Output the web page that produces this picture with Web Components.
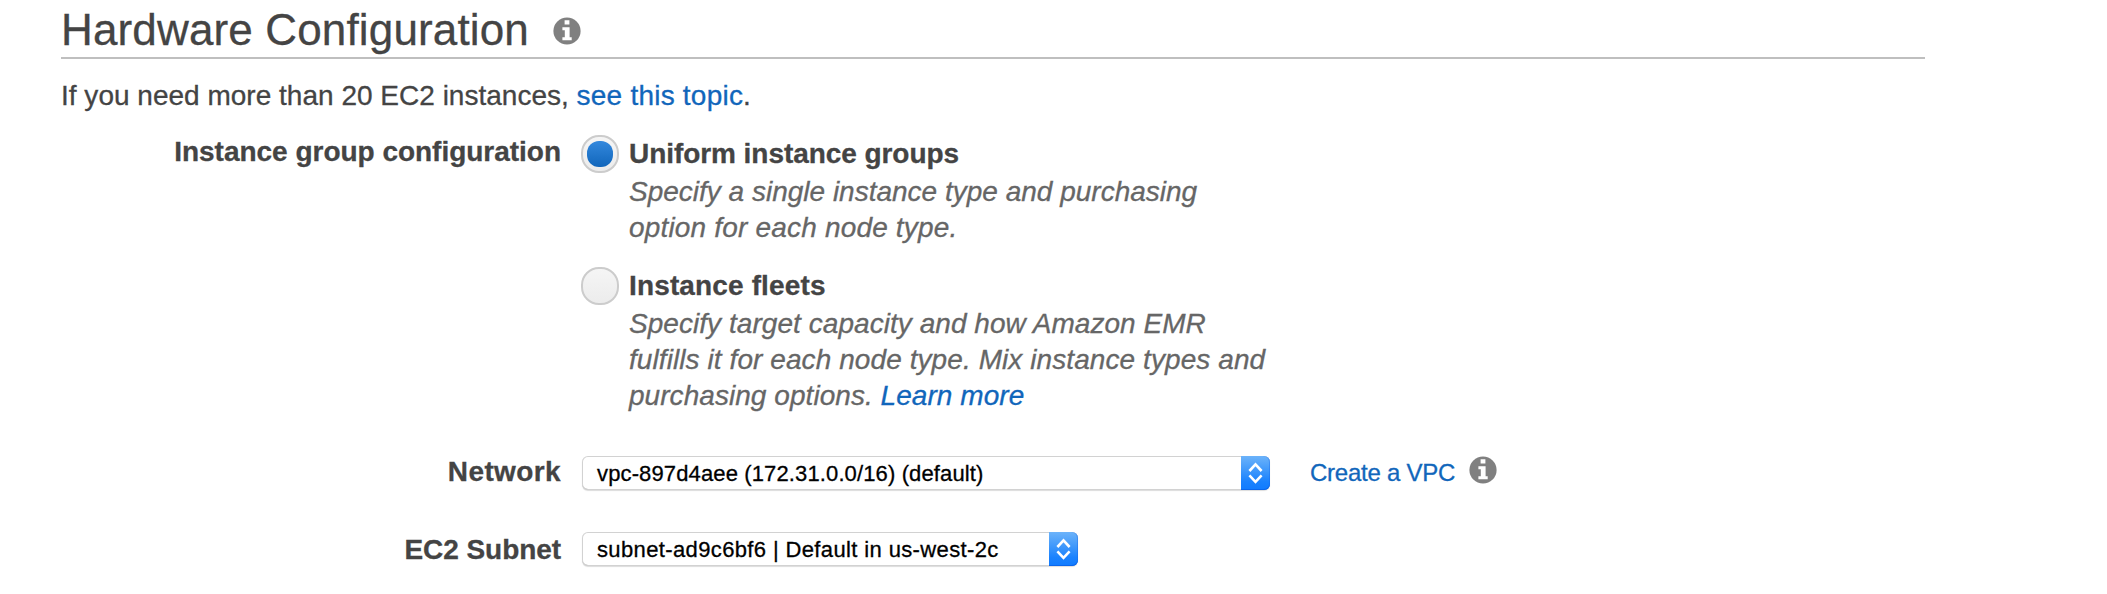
<!DOCTYPE html>
<html lang="en">
<head>
<meta charset="utf-8">
<title>Hardware Configuration</title>
<style>
body { margin: 0; background: #fff; color: #444; font: 28px/31px "Liberation Sans", Arial, sans-serif; -webkit-text-stroke: .3px; }
</style>
</head>
<body>
<hardware-config></hardware-config>
<script>
function define(name, html) {
  const t = document.createElement('template');
  t.innerHTML = html;
  customElements.define(name, class extends HTMLElement {
    constructor() {
      super();
      this.attachShadow({ mode: 'open' }).append(t.content.cloneNode(true));
    }
  });
}

define('info-icon', `
<style>:host{display:block;width:28px;height:28px;flex:none}svg{display:block}</style>
<svg width="28" height="28" viewBox="0 0 28 28"><circle cx="14" cy="14" r="13.6" fill="#808080"/>
<path fill="#fff" d="M11.6 3.3h4.8v4.3h-4.8zM9.4 10.2h7.2v10h2.1v3.1H9.4v-3.1h2.4v-6.9H9.4z"/></svg>`);

define('text-link', `
<style>:host{display:inline;color:#1166bb}a{color:inherit;text-decoration:none}</style>
<a href="#"><slot></slot></a>`);

define('section-title', `
<style>
:host{display:flex;align-items:flex-start;gap:23.5px;width:1864px;height:57px;border-bottom:2px solid #bfbfbf}
h1{margin:5px 0 0;font-size:44px;line-height:49px;font-weight:400;letter-spacing:.15px;white-space:nowrap}
info-icon{margin-top:17px}
</style>
<h1><slot></slot></h1><info-icon></info-icon>`);

define('form-row', `
<style>
:host{display:grid;grid-template-columns:500px auto;column-gap:20px;justify-content:start}
.label{font-weight:700;text-align:right;white-space:nowrap;padding-top:var(--label-top,0)}
.field{display:flex;align-items:flex-start}
</style>
<div class="label"><slot name="label"></slot></div><div class="field"><slot></slot></div>`);

define('radio-option', `
<style>
:host{display:grid;grid-template-columns:38px auto;column-gap:10px;height:132px}
.radio{display:grid;place-items:center;box-sizing:border-box;width:38px;height:38px;border:2px solid #ccc;border-radius:18px;background:linear-gradient(#f5f5f5,#ececec)}
.dot{display:none;width:26px;height:26px;border-radius:12px;background:linear-gradient(#3388dd,#1166bb)}
:host([checked]) .dot{display:block}
.name{padding-top:3px;font-weight:700;white-space:nowrap}
.text{margin-top:5px;line-height:36px;font-style:italic;color:#666;white-space:nowrap}
</style>
<div class="radio"><div class="dot"></div></div>
<div><div class="name"><slot name="name"></slot></div><div class="text"><slot></slot></div></div>`);

define('select-box', `
<style>
:host{display:flex;box-sizing:border-box;height:34px;margin-left:1px;border-radius:6px;background:#fff;box-shadow:inset 0 0 0 1px #d2d2d2,inset 0 -1px 0 #b8b8b8,0 1px 1px rgba(0,0,0,.14);color:#000}
.value{flex:1;padding:5px 0 0 15px;font-size:22px;line-height:25px;white-space:nowrap}
.arrows{display:block;width:29px;height:34px;border-radius:0 6px 6px 0;background:linear-gradient(#6cb3fa,#3f98fb 42%,#1a82fe 75%,#107bff);box-shadow:inset 0 -1px 0 #0a66ec,inset -1px 0 0 rgba(20,100,230,.35)}
svg{display:block}
</style>
<div class="value"><slot></slot></div>
<div class="arrows"><svg width="29" height="34" fill="none" stroke="#fff" stroke-width="2.6"><path d="M8.4 15l6.1-6.6 6.1 6.6M8.4 19.4l6.1 6.4 6.1-6.4"/></svg></div>`);

define('hardware-config', `
<style>
:host{display:flex;flex-direction:column;box-sizing:border-box;height:594px;padding-left:61px}
p{margin:21px 0 24px;letter-spacing:.01px;white-space:nowrap}
p text-link{letter-spacing:.22px}
.groups{--label-top:1px;height:321px}
.groups .options{display:flex;flex-direction:column}
.network{height:76px}
.subnet{--label-top:2px}
.vpc{margin:3px 13.5px 0 40px;font-size:24px;line-height:27px;letter-spacing:-.25px;white-space:nowrap}
</style>
<section-title>Hardware Configuration</section-title>
<p>If you need more than 20 EC2 instances, <text-link>see this topic</text-link>.</p>
<form-row class="groups"><span slot="label" style="letter-spacing:-.02px">Instance group configuration</span>
<div class="options">
<radio-option checked><span slot="name" style="letter-spacing:-.06px">Uniform instance groups</span>Specify a single instance type and purchasing<br><span style="letter-spacing:.18px">option for each node type.</span></radio-option>
<radio-option><span slot="name" style="letter-spacing:.14px">Instance fleets</span><span style="letter-spacing:.05px">Specify target capacity and how Amazon EMR<br><span style="letter-spacing:.08px">fulfills it for each node type. Mix instance types and</span><br>purchasing options. <text-link>Learn more</text-link></span></radio-option>
</div></form-row>
<form-row class="network"><span slot="label" style="letter-spacing:.38px">Network</span>
<select-box style="width:688px;letter-spacing:.13px">vpc-897d4aee (172.31.0.0/16) (default)</select-box>
<text-link class="vpc" style="display:block">Create a VPC</text-link><info-icon></info-icon></form-row>
<form-row class="subnet"><span slot="label" style="letter-spacing:-.06px">EC2 Subnet</span>
<select-box style="width:496px;letter-spacing:.37px">subnet-ad9c6bf6 | Default in us-west-2c</select-box></form-row>`);
</script>
</body>
</html>
